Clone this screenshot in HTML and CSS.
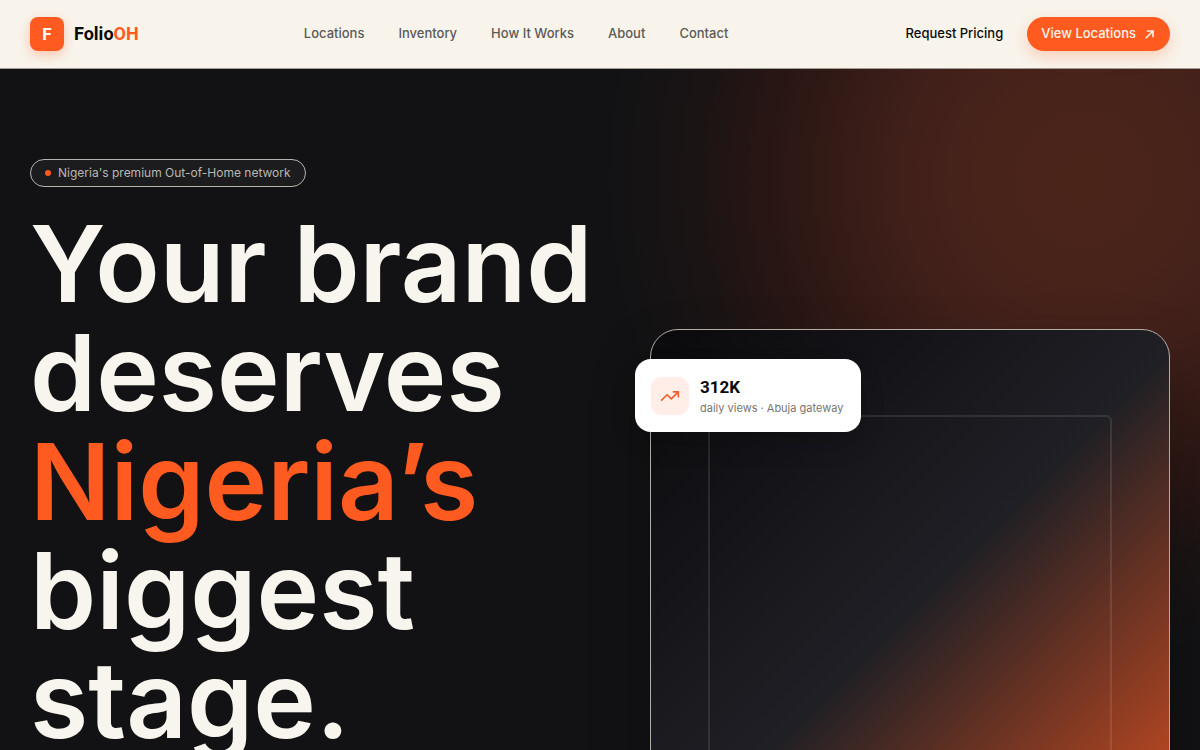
FILE: index.html
```html
<!DOCTYPE html>
<html lang="en">
<head>
<meta charset="utf-8">
<meta name="viewport" content="width=device-width, initial-scale=1">
<title>FolioOH</title>
<link rel="stylesheet" href="styles.css">
</head>
<body>
<header class="site-header">
  <a class="brand" href="#"><span class="brand-mark">F</span><span class="brand-name">Folio<span class="accent">OH</span></span></a>
  <nav class="site-nav" aria-label="Main">
    <a href="#">Locations</a>
    <a href="#">Inventory</a>
    <a href="#">How It Works</a>
    <a href="#">About</a>
    <a href="#">Contact</a>
  </nav>
  <div class="header-actions">
    <a class="pricing-link" href="#">Request Pricing</a>
    <a class="cta" href="#"><span>View Locations</span>
      <svg class="cta-icon" viewBox="0 0 24 24" aria-hidden="true"><path d="M5 19 18 6M7 5.500h11.500V17"/></svg>
    </a>
  </div>
</header>
<main class="hero">
  <section class="hero-copy">
    <p class="badge"><span class="badge-dot"></span><span class="badge-text">Nigeria's premium Out-of-Home network</span></p>
    <h1 class="headline">Your brand deserves <span class="accent">Nigeria’s</span> biggest stage.</h1>
  </section>
  <section class="showcase">
    <div class="board"></div>
    <div class="stat-card">
      <span class="stat-icon"><svg viewBox="0 0 24 24" aria-hidden="true"><path d="M2 17 8.500 10.500l5 5L22 7"/><path d="M16 7h6v6"/></svg></span>
      <div>
        <strong class="stat-value">312K</strong>
        <span class="stat-label">daily views · Abuja gateway</span>
      </div>
    </div>
  </section>
</main>
</body>
</html>
```

FILE: styles.css
```css
* { box-sizing: border-box; }
body {
  margin: 0;
  background: #121214;
  font-family: Inter, "Liberation Sans", sans-serif;
  color: #0a0a0b;
}
a { color: inherit; text-decoration: none; }
.accent { color: #ff5a1f; }

.site-header {
  display: flex;
  align-items: center;
  justify-content: space-between;
  padding: 17px 30px;
  background: #f8f4ec;
  border-bottom: 1px solid #a19d98;
}
.brand { display: flex; align-items: center; gap: 10px; }
.brand-mark {
  display: grid;
  place-items: center;
  width: 34px;
  height: 34px;
  border-radius: 8px;
  background: #ff5a1f;
  color: #fff;
  font: 700 17px/32px Roboto, sans-serif;
  box-shadow: 0 4px 12px rgba(255, 90, 31, .3);
}
.brand-name { font: 700 18px/24px Roboto, sans-serif; }
.site-nav {
  display: flex;
  gap: 34px;
  margin-right: 12px;
  padding-bottom: 2px;
  font-size: 13px;
  line-height: 20px;
  font-weight: 500;
  color: #5c5a57;
}
.header-actions { display: flex; align-items: center; gap: 24px; font-size: 13px; line-height: 20px; font-weight: 500; }
.pricing-link, .cta span { padding-bottom: 2px; }
.cta {
  display: flex;
  align-items: center;
  gap: 7px;
  height: 34px;
  padding: 0 14px;
  border-radius: 17px;
  background: #ff5a1f;
  color: #f8f4ec;
  box-shadow: 0 6px 16px rgba(255, 90, 31, .25);
}
.cta-icon { width: 13px; height: 13px; fill: none; stroke: currentColor; stroke-width: 3; }

.hero {
  display: grid;
  grid-template-columns: 1fr 520px;
  gap: 40px;
  align-items: start;
  padding: 90px 30px;
  background: radial-gradient(circle at 1085px 110px, #4a2419 0, #48231a 100px, #41201a 180px, #351b16 250px, #281614 320px, #1b1414 390px, #121214 480px);
}
.badge {
  display: inline-flex;
  align-items: center;
  gap: 7px;
  height: 28px;
  margin: 0 0 22px;
  padding: 0 14px;
  border: 1px solid #b5b3ae;
  border-radius: 14px;
  background: #1c1c1e;
  color: #b9b7b3;
  font-size: 12px;
}
.badge-text { padding-bottom: 2px; }
.badge-dot { width: 6px; height: 6px; border-radius: 50%; background: #ff5a1f; }
.headline {
  margin: 0;
  color: #f8f5ee;
  font-size: 106px;
  line-height: 109px;
  font-weight: 600;
}
.showcase {
  position: relative;
  aspect-ratio: 4 / 5;
  margin-top: 170px;
  padding: 85px 57px;
  border: 1px solid #b5aca4;
  border-radius: 28px;
  background: linear-gradient(135deg, #0a0a0c 0%, #1f1f25 46%, #ff5a1f 100%) border-box;
  box-shadow: 0 30px 60px rgba(0, 0, 0, .25);
}
.board { height: 100%; border: 2px solid rgba(255, 255, 255, .1); border-radius: 6px; }
.stat-card {
  position: absolute;
  top: 29px;
  left: -16px;
  display: flex;
  align-items: center;
  gap: 11px;
  padding: 15px 18px 15px 16px;
  border-radius: 16px;
  background: #fff;
  box-shadow: 0 12px 24px rgba(0, 0, 0, .15);
  white-space: nowrap;
}
.stat-icon {
  display: grid;
  place-items: center;
  width: 38px;
  height: 38px;
  border-radius: 11px;
  background: #ffeee8;
}
.stat-icon svg {
  width: 20px;
  height: 20px;
  fill: none;
  stroke: #f0602e;
  stroke-width: 2;
  stroke-linecap: round;
  stroke-linejoin: round;
}
.stat-value { display: block; font: 700 17px/26px Roboto, sans-serif; }
.stat-label { display: block; color: #77756f; font-size: 11px; line-height: 17px; }
```
